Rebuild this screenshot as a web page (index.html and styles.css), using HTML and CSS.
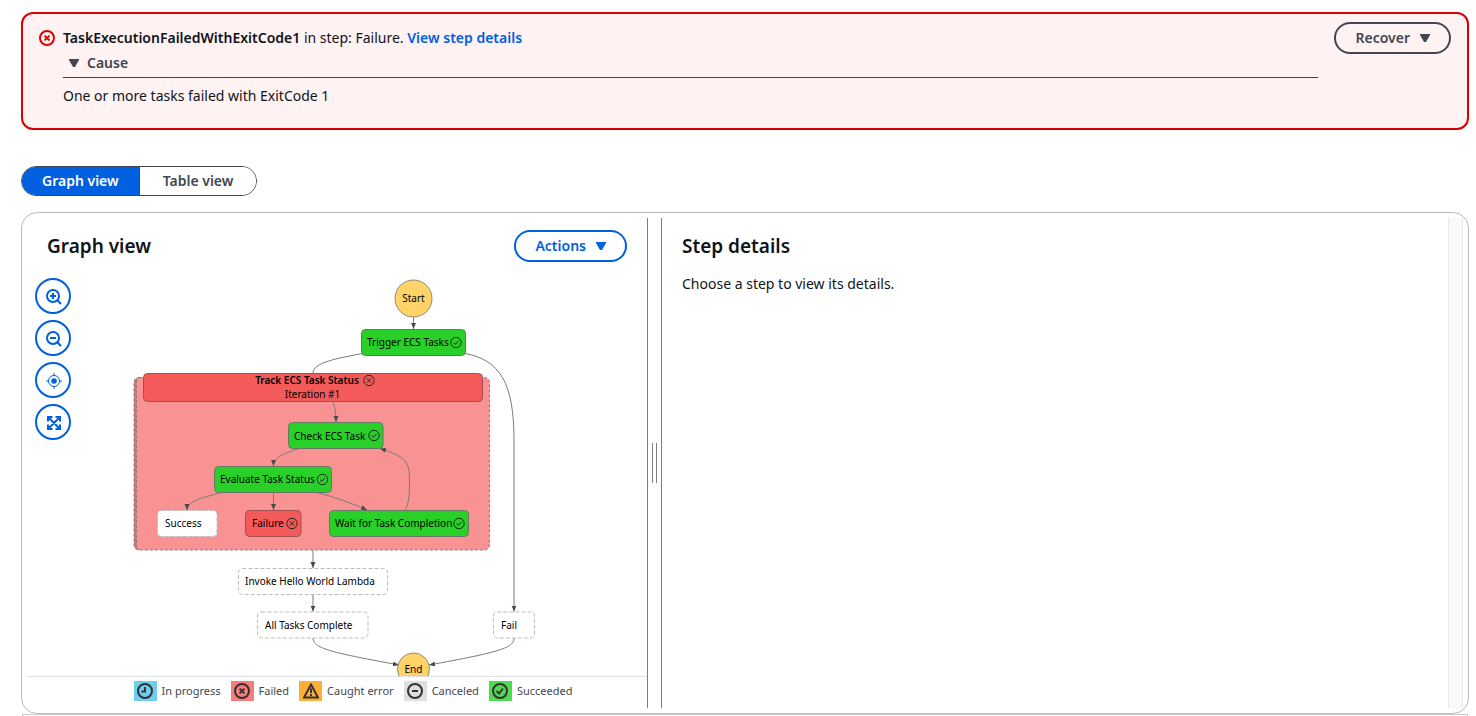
FILE: index.html
```html
<!DOCTYPE html>
<html lang="en">
<head>
<meta charset="utf-8">
<title>Execution details</title>
<link rel="stylesheet" href="styles.css">
</head>
<body>
<main class="page">
  <section class="alert" role="alert">
    <svg class="alert-icon" viewBox="0 0 16 16" width="16" height="16" aria-hidden="true"><circle cx="8" cy="8" r="7"/><path d="M5.6 5.6l4.8 4.8M10.4 5.6l-4.8 4.8"/></svg>
    <div class="alert-body">
      <p class="alert-title"><strong>TaskExecutionFailedWithExitCode1</strong> in step: Failure. <a class="link" href="#details">View step details</a></p>
      <button class="expander" type="button" aria-expanded="true"><svg class="caret" viewBox="0 0 10 8" width="10" height="8" aria-hidden="true"><path d="M0 0h10v1L6 8H4L0 1z"/></svg>Cause</button>
      <p class="alert-cause">One or more tasks failed with ExitCode 1</p>
    </div>
    <button class="button" type="button">Recover<svg class="caret" viewBox="0 0 10 8" width="10" height="8" aria-hidden="true"><path d="M0 0h10v1L6 8H4L0 1z"/></svg></button>
  </section>

  <div class="segments">
    <button class="segment segment-active" type="button" aria-pressed="true">Graph view</button>
    <button class="segment" type="button" aria-pressed="false">Table view</button>
  </div>

  <section class="panel">
    <div class="graph-pane">
      <header class="graph-header">
        <h2 class="heading">Graph view</h2>
        <button class="button button-blue" type="button">Actions<svg class="caret" viewBox="0 0 10 8" width="10" height="8" aria-hidden="true"><path d="M0 0h10v1L6 8H4L0 1z"/></svg></button>
      </header>
      <div class="canvas">
        <div class="zoom-tools">
          <button class="round" type="button" aria-label="Zoom in"><svg viewBox="0 0 16 16" width="16" height="16"><circle cx="7" cy="7" r="6"/><path d="M7 4v6M4 7h6M11 11l4 4"/></svg></button>
          <button class="round" type="button" aria-label="Zoom out"><svg viewBox="0 0 16 16" width="16" height="16"><circle cx="7" cy="7" r="6"/><path d="M4 7h6M11 11l4 4"/></svg></button>
          <button class="round" type="button" aria-label="Center graph"><svg class="thin" viewBox="0 0 16 16" width="16" height="16"><circle cx="8" cy="8" r="5.500"/><circle class="dot" cx="8" cy="8" r="2.800"/><path d="M8 0v3M8 13v3M0 8h3M13 8h3"/></svg></button>
          <button class="round" type="button" aria-label="Fit to screen"><svg viewBox="0 0 16 16" width="16" height="16"><path d="M2 6.500V2h4.500M9.500 2H14v4.500M14 9.500V14H9.500M6.500 14H2V9.500M2 2l12 12M14 2L2 14"/></svg></button>
        </div>
        <svg class="graph" viewBox="27 266 620 410" width="620" height="410" role="img" aria-label="Workflow graph">
          <defs>
            <marker id="arrow" viewBox="0 0 6 6" refX="6" refY="3" markerWidth="6" markerHeight="6" markerUnits="userSpaceOnUse" orient="auto"><path class="arrow" d="M0 0.500L6 3L0 5.500z"/></marker>
            <g id="ok"><circle r="5.200"/><path d="M-2.500 0.200L-0.700 1.800L2.500 -1.500"/></g>
            <g id="bad"><circle r="5.200"/><path d="M-2.200 -2.200L2.200 2.200M2.200 -2.200L-2.200 2.200"/></g>
          </defs>

          <rect class="stack" x="134" y="377.500" width="350" height="172.500" rx="5"/>
          <rect class="map" x="136.500" y="377.500" width="353" height="172.500" rx="5"/>
          <rect class="frame" x="134" y="377.500" width="355.500" height="172.500" rx="5"/>
          <path class="frame" d="M136.500 380v167"/>

          <g class="edges">
            <path d="M413.500 317V329"/>
            <path class="plain" d="M362 353.500C340 358 313 362 313 373"/>
            <path d="M465 353.500C500 360 514 383 514 440V611.500"/>
            <path d="M333 402C335 408 336 413 336 422"/>
            <path d="M299 448.500C282 454 273.500 458 273.500 466"/>
            <path d="M405 510C409 504 409.500 494 409.500 480C409.500 463 407 457 380 448.500"/>
            <path d="M222 492.500C200 498 187 502 187 510"/>
            <path d="M273.500 492.500V510"/>
            <path d="M317 492.500Q345 500 367 510"/>
            <path d="M313 550V568"/>
            <path d="M313 594V611.500"/>
            <path d="M313 638C313 649 335 653 399 665"/>
            <path d="M514 638C514 648 500 652 429 665"/>
          </g>

          <circle class="terminal" cx="413.500" cy="298.500" r="18.500"/>
          <text class="node-text middle" x="413.500" y="302">Start</text>
          <circle class="terminal" cx="413.500" cy="669" r="16"/>
          <text class="node-text middle" x="413.500" y="673">End</text>

          <rect class="node green" x="361.500" y="329.500" width="104" height="26" rx="4"/>
          <text class="node-text" x="367" y="346">Trigger ECS Tasks</text>
          <use class="badge" href="#ok" x="456" y="342.500"/>

          <rect class="node red" x="143.500" y="373.500" width="339" height="28" rx="4"/>
          <text class="node-text middle strong" x="307" y="384">Track ECS Task Status</text>
          <use class="badge" href="#bad" x="369" y="380.500"/>
          <text class="node-text middle" x="312.500" y="398">Iteration #1</text>

          <rect class="node green" x="288.500" y="422.500" width="94.500" height="26" rx="4"/>
          <text class="node-text" x="294" y="440">Check ECS Task</text>
          <use class="badge" href="#ok" x="374" y="435.500"/>

          <rect class="node green" x="214.500" y="466.500" width="117" height="26" rx="4"/>
          <text class="node-text" x="220" y="483">Evaluate Task Status</text>
          <use class="badge" href="#ok" x="322.500" y="479.500"/>

          <rect class="node waiting" x="157.500" y="510.500" width="59.500" height="26" rx="4"/>
          <text class="node-text" x="165" y="527">Success</text>

          <rect class="node red" x="245.500" y="510.500" width="55.500" height="26" rx="4"/>
          <text class="node-text" x="252" y="527">Failure</text>
          <use class="badge" href="#bad" x="292" y="523.500"/>

          <rect class="node green" x="329.500" y="510.500" width="139" height="26" rx="4"/>
          <text class="node-text" x="335" y="527">Wait for Task Completion</text>
          <use class="badge" href="#ok" x="459" y="523.500"/>

          <rect class="node waiting" x="238.500" y="568.500" width="149" height="26" rx="4"/>
          <text class="node-text" x="245" y="585">Invoke Hello World Lambda</text>

          <rect class="node waiting" x="257.500" y="612" width="110.500" height="26" rx="4"/>
          <text class="node-text" x="265" y="629">All Tasks Complete</text>

          <rect class="node waiting" x="493.500" y="612" width="41" height="26" rx="4"/>
          <text class="node-text" x="501" y="629">Fail</text>
        </svg>
      </div>
      <ul class="legend">
        <li class="legend-item"><span class="swatch swatch-progress"><svg viewBox="0 0 16 16" width="16" height="16"><circle cx="8" cy="8" r="7"/><path d="M8 4v4.500H4.500"/></svg></span>In progress</li>
        <li class="legend-item"><span class="swatch swatch-failed"><svg viewBox="0 0 16 16" width="16" height="16"><circle cx="8" cy="8" r="7"/><path d="M5.600 5.600l4.800 4.800M10.400 5.600l-4.800 4.800"/></svg></span>Failed</li>
        <li class="legend-item"><span class="swatch swatch-caught"><svg viewBox="0 0 16 16" width="16" height="16"><path d="M8 1.500L15 14.500H1zM8 5.500v4.500M8 11v2"/></svg></span>Caught error</li>
        <li class="legend-item"><span class="swatch swatch-canceled"><svg viewBox="0 0 16 16" width="16" height="16"><circle cx="8" cy="8" r="7"/><path d="M5 8h6"/></svg></span>Canceled</li>
        <li class="legend-item"><span class="swatch swatch-succeeded"><svg viewBox="0 0 16 16" width="16" height="16"><circle cx="8" cy="8" r="7"/><path d="M4.500 8l2.500 2.500L11 5.500"/></svg></span>Succeeded</li>
      </ul>
    </div>
    <div class="splitter" role="separator" aria-orientation="vertical"><span class="grip"></span></div>
    <div class="details-pane" id="details">
      <div class="details">
        <h2 class="heading">Step details</h2>
        <p class="details-text">Choose a step to view its details.</p>
      </div>
      <div class="scroll-track"></div>
    </div>
  </section>
  <section class="next-panel"></section>
</main>
</body>
</html>
```
FILE: styles.css
```css
* { box-sizing: border-box; }

body {
  margin: 0;
  background: #fff;
  color: #0f141a;
  font: 14px/20px "Noto Sans", "Open Sans", sans-serif;
}

button {
  font: inherit;
  cursor: pointer;
}

p, h2, ul { margin: 0; padding: 0; }

.page { padding: 12px 7px 0 21px; }

.alert {
  display: flex;
  align-items: flex-start;
  gap: 8px;
  padding: 8px 16px 22px;
  border: 2px solid #db0000;
  border-radius: 12px;
  background: #fff2f2;
}

.alert-icon {
  flex: none;
  margin-top: 8px;
  fill: none;
  stroke: #db0000;
  stroke-width: 2;
}

.alert-body {
  flex: 1;
  min-width: 0;
  margin-right: 8px;
  padding-top: 6px;
}

.alert-title strong { font-weight: 600; }

.link {
  color: #0060df;
  font-weight: 600;
  text-decoration: none;
}

.expander {
  display: flex;
  align-items: center;
  gap: 8px;
  width: 100%;
  height: 30px;
  padding: 0 6px;
  border: 0;
  border-bottom: 1px solid #424650;
  background: none;
  color: #424650;
  font-weight: 600;
}

.alert-cause { padding-top: 8px; }

.caret { fill: currentColor; }

.button {
  display: flex;
  align-items: center;
  gap: 10px;
  height: 32px;
  padding: 0 19px;
  border: 2px solid #424650;
  border-radius: 16px;
  background: transparent;
  color: #424650;
  font-weight: 600;
}

.button-blue {
  border-color: #0060df;
  color: #0060df;
}

.segments {
  display: flex;
  width: max-content;
  margin: 36px 0 16px;
  overflow: hidden;
  border: 1px solid #424650;
  border-radius: 15px;
}

.segment {
  height: 28px;
  padding: 0 23px;
  border: 0;
  background: #fff;
  color: #424650;
  font-weight: 600;
}

.segment-active {
  padding: 0 20px;
  border-right: 1px solid #424650;
  background: #0060df;
  color: #fff;
}

.panel {
  display: grid;
  grid-template-columns: minmax(0, 620fr) 15px minmax(0, 801fr);
  padding: 5px;
  border: 1px solid #b9bbc2;
  border-radius: 16px;
}

.graph-header {
  display: flex;
  align-items: center;
  justify-content: space-between;
  padding: 12px 20px 4px;
}

.heading {
  font-size: 19px;
  line-height: 24px;
  font-weight: 600;
}

.canvas {
  position: relative;
  overflow: hidden;
}

.zoom-tools {
  position: absolute;
  top: 12px;
  left: 8px;
  display: grid;
  gap: 6px;
}

.round {
  display: grid;
  place-items: center;
  width: 36px;
  height: 36px;
  padding: 2px 0 0 2px;
  border: 2px solid #0060df;
  border-radius: 50%;
  background: #fff;
}

.round svg {
  fill: none;
  stroke: #0060df;
  stroke-width: 2;
}

.round .thin { stroke-width: 1; }
.round .dot { fill: #0060df; stroke: none; }

.graph {
  display: block;
  margin: 0 auto;
}

.stack { fill: #cd7677; }
.map { fill: #f99393; }

.frame {
  fill: none;
  stroke: #8f7c7c;
  stroke-dasharray: 3 2;
}

.edges path {
  fill: none;
  stroke: #7a7a7a;
  marker-end: url(#arrow);
}

.edges .plain { marker-end: none; }
.arrow { fill: #4a4a4a; }

.terminal {
  fill: #ffd368;
  stroke: #8f8a7c;
}

.node { stroke: #6b7565; }
.green { fill: #28d028; }
.red { fill: #f55a5a; stroke: #a05050; }

.waiting {
  fill: #fff;
  stroke: #bdbdbd;
  stroke-dasharray: 4 2;
}

.node-text {
  fill: #000;
  font-size: 10px;
}

.middle { text-anchor: middle; }
.strong { font-weight: 600; }

.badge {
  fill: none;
  stroke: #1f2a1f;
}

.legend {
  display: flex;
  justify-content: center;
  gap: 10px;
  padding: 4px 20px 7px 52px;
  border-top: 1px solid #dedee3;
  list-style: none;
}

.legend-item {
  display: flex;
  align-items: center;
  gap: 5px;
  color: #424650;
  font-size: 11px;
}

.swatch {
  display: grid;
  place-items: center;
  width: 23px;
  height: 20px;
}

.swatch svg {
  fill: none;
  stroke: #333;
  stroke-width: 2;
}

.swatch-progress { background: #6fcdee; }
.swatch-failed { background: #f77c7c; }
.swatch-caught { background: #ffae35; }
.swatch-canceled { background: #dfdfdf; }
.swatch-succeeded { background: #51d951; }

.splitter {
  display: grid;
  place-items: center;
  border: 1px solid #7d7d84;
  border-width: 0 1px;
}

.grip {
  width: 5px;
  height: 40px;
  border: 1px solid #7d7d84;
  border-width: 0 1px;
}

.details-pane { display: flex; }

.details {
  flex: 1;
  padding: 16px 20px;
}

.details-text { padding-top: 16px; }

.scroll-track {
  width: 15px;
  border: 1px solid #e6e6e6;
  border-width: 0 1px;
  background: #f9f9f9;
}

.next-panel {
  height: 2px;
  margin: 0 1px;
  border: 1px solid #c9cad0;
  border-bottom: 0;
}
```
